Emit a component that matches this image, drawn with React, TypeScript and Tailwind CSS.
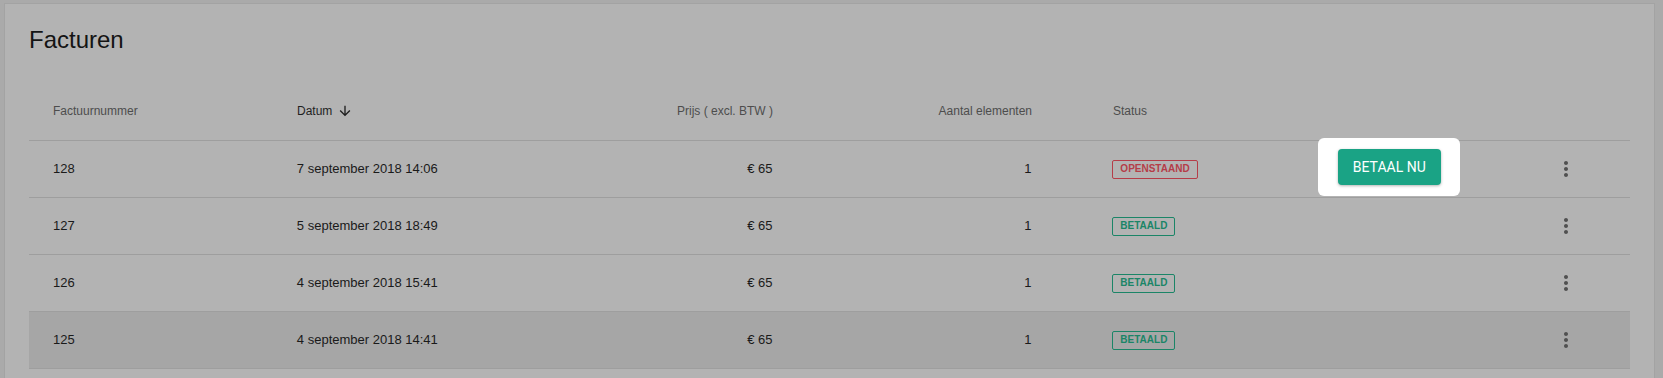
import React from 'react';

type Invoice = {
  nr: string;
  date: string;
  price: string;
  count: number;
  paid: boolean;
};

const invoices: Invoice[] = [
  { nr: '128', date: '7 september 2018 14:06', price: '€ 65', count: 1, paid: false },
  { nr: '127', date: '5 september 2018 18:49', price: '€ 65', count: 1, paid: true },
  { nr: '126', date: '4 september 2018 15:41', price: '€ 65', count: 1, paid: true },
  { nr: '125', date: '4 september 2018 14:41', price: '€ 65', count: 1, paid: true },
];

const MoreVert = () => (
  <svg width="24" height="24" viewBox="0 0 24 24" fill="#505050">
    <path d="M12 8c1.1 0 2-.9 2-2s-.9-2-2-2-2 .9-2 2 .9 2 2 2zm0 2c-1.1 0-2 .9-2 2s.9 2 2 2 2-.9 2-2-.9-2-2-2zm0 6c-1.1 0-2 .9-2 2s.9 2 2 2 2-.9 2-2-.9-2-2-2z" />
  </svg>
);

const ArrowDown = () => (
  <svg width="16" height="16" viewBox="0 0 24 24" fill="#1f1f1f">
    <path d="M20 12l-1.41-1.41L13 16.17V4h-2v12.17l-5.58-5.59L4 12l8 8 8-8z" />
  </svg>
);

const StatusBadge = ({ paid }: { paid: boolean }) =>
  paid ? (
    <span className="inline-flex h-[19px] items-center rounded-[2px] border border-[#1b8567] px-[7px] text-[10px] font-bold leading-none text-[#1b8567]">
      BETAALD
    </span>
  ) : (
    <span className="inline-flex h-[19px] items-center rounded-[2px] border border-[#b53d48] px-[7px] text-[10px] font-bold leading-none text-[#b53d48]">
      OPENSTAAND
    </span>
  );

export default function App() {
  return (
    <div className="h-[378px] overflow-hidden bg-[#aaaaaa] pl-[4px] pr-[8px] pt-[3px] font-['Liberation_Sans',Arial,sans-serif]">
      <div className="h-[420px] border border-[#a3a3a3] bg-[#b3b3b3] px-6 pt-[20px]">
        <h1 className="text-[24px] leading-[32px] font-normal text-[#141414]">Facturen</h1>

        <div className="mt-[25px]">
          {/* Header */}
          <div className="flex h-[60px] items-center border-b border-[#9e9e9e] text-[12px] text-[#4d4d4d]">
            <div className="w-[244px] pl-6">Factuurnummer</div>
            <div className="flex w-[250px] items-center pl-6 text-[#1f1f1f]">
              Datum
              <span className="ml-[5px] flex">
                <ArrowDown />
              </span>
            </div>
            <div className="w-[274px] pr-6 text-right">Prijs ( excl. BTW )</div>
            <div className="w-[259px] pr-6 text-right">Aantal elementen</div>
            <div className="w-[224px] pl-[57px]">Status</div>
            <div className="w-[219px]" />
            <div className="flex-1" />
          </div>

          {/* Rows */}
          {invoices.map((inv, i) => (
            <div
              key={inv.nr}
              className={
                'flex h-[57px] items-center border-b border-[#9e9e9e] text-[13px] text-[#1a1a1a] ' +
                (i === invoices.length - 1 ? 'bg-[#a6a6a6]' : '')
              }
            >
              <div className="w-[244px] pl-6">{inv.nr}</div>
              <div className="w-[250px] pl-6">{inv.date}</div>
              <div className="w-[274px] pr-6 text-right">{inv.price}</div>
              <div className="w-[259px] pr-6 text-right">{inv.count}</div>
              <div className="flex w-[224px] pl-[57px]">
                <StatusBadge paid={inv.paid} />
              </div>
              <div className="relative flex h-full w-[219px] items-center justify-center">
                {!inv.paid && (
                  <div className="absolute left-[39px] top-[-3px] flex h-[58px] w-[142px] items-center justify-center rounded-[6px] bg-white">
                    <button className="h-[36px] w-[103px] rounded-[4px] bg-[#1aa385] font-['Roboto',sans-serif] text-[14px] text-white shadow-[0_1px_3px_rgba(0,0,0,0.3)]">
                      BETAAL NU
                    </button>
                  </div>
                )}
              </div>
              <div className="flex w-[132px] justify-center pl-[4px]">
                <MoreVert />
              </div>
            </div>
          ))}
        </div>
      </div>
    </div>
  );
}
